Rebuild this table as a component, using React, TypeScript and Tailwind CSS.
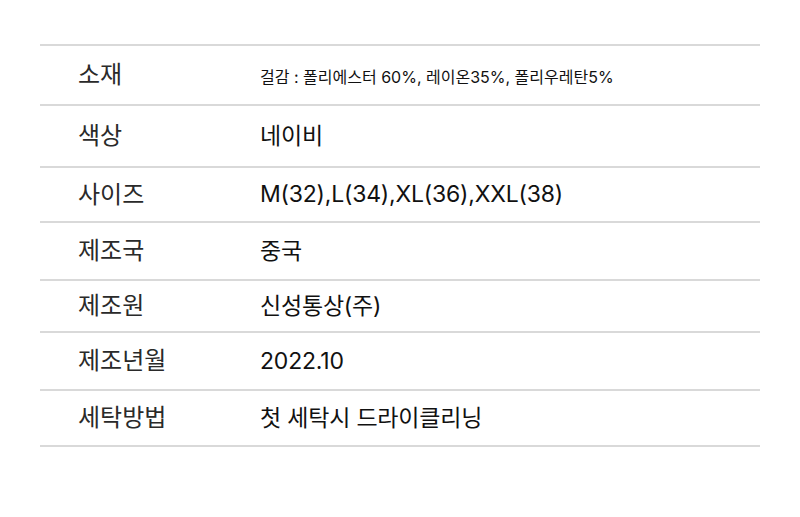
const rows = [
  { label: '소재', value: '걸감 : 폴리에스터 60%, 레이온35%, 폴리우레탄5%', h: 'h-[60px]', small: true },
  { label: '색상', value: '네이비', h: 'h-[62px]' },
  { label: '사이즈', value: 'M(32),L(34),XL(36),XXL(38)', h: 'h-[55px]' },
  { label: '제조국', value: '중국', h: 'h-[58px]' },
  { label: '제조원', value: '신성통상(주)', h: 'h-[52px]' },
  { label: '제조년월', value: '2022.10', h: 'h-[58px]' },
  { label: '세탁방법', value: '첫 세탁시 드라이클리닝', h: 'h-[56px]' },
];

export default function App() {
  return (
    <div className="w-[800px] h-[517px] bg-white pt-[44px] px-[40px] font-['Inter','Noto_Sans_CJK_KR',sans-serif] text-[#111]">
      <div className="border-t-2 border-[#d9d9d9]">
        {rows.map((row) => (
          <div key={row.label} className={`flex items-center border-b-2 border-[#d9d9d9] ${row.h}`}>
            <div className="w-[220px] pl-[38px] text-[24px] text-[#2a2a2a]">{row.label}</div>
            <div className={row.small ? 'text-[16px] pt-[4px]' : 'text-[23px] tracking-[-0.2px]'}>{row.value}</div>
          </div>
        ))}
      </div>
    </div>
  );
}
